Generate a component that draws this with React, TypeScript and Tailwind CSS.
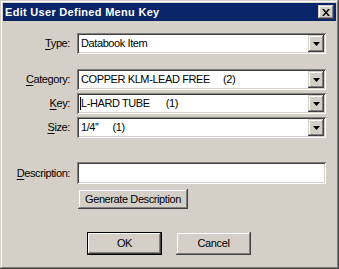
const raised =
  "shadow-[inset_-1px_-1px_#404040,inset_1px_1px_#d4d0c8,inset_-2px_-2px_#808080,inset_2px_2px_#ffffff]";
const sunken =
  "shadow-[inset_1px_1px_#808080,inset_-1px_-1px_#ffffff,inset_2px_2px_#404040,inset_-2px_-2px_#d4d0c8]";

function Label({ acc, rest }: { acc: string; rest: string }) {
  return (
    <div className="w-[67px] text-right text-black">
      <span className="underline underline-offset-[2px]">{acc}</span>
      {rest}
    </div>
  );
}

function Combo({ value, count, gap = "", caret }: { value: string; count?: string; gap?: string; caret?: boolean }) {
  return (
    <div className={`relative flex h-[21px] w-[249px] items-center bg-white pl-[4px] ${sunken}`}>
      {caret && <div className="absolute left-[3px] top-[4px] h-[13px] w-[1px] bg-black" />}
      <div className="flex flex-1 text-black">
        <span className="whitespace-pre">{value}</span>
        {count && <span className={gap}>{count}</span>}
      </div>
      <div className={`mr-[2px] flex h-[17px] w-[16px] items-center justify-center bg-[#d4d0c8] ${raised}`}>
        <svg width="7" height="4" viewBox="0 0 7 4">
          <path d="M0 0h7L3.5 4z" fill="#000" />
        </svg>
      </div>
    </div>
  );
}

function Row({ acc, rest, children, className = "" }: { acc: string; rest: string; children: React.ReactNode; className?: string }) {
  return (
    <div className={`flex items-center gap-[7px] ${className}`}>
      <Label acc={acc} rest={rest} />
      {children}
    </div>
  );
}

export default function App() {
  return (
    <div
      className={`flex h-[269px] w-[339px] flex-col bg-[#d4d0c8] p-[3px] font-['Liberation_Sans',Arial,sans-serif] text-[11px] tracking-[-0.4px] ${raised}`}
    >
      <div className="flex h-[18px] items-center justify-between bg-[#0a246a] pl-[2px] pr-[2px]">
        <span className="text-[11px] font-bold tracking-[0.3px] text-white">Edit User Defined Menu Key</span>
        <div className={`flex h-[14px] w-[16px] items-center justify-center bg-[#d4d0c8] ${raised}`}>
          <svg width="8" height="7" viewBox="0 0 8 7">
            <path d="M0 0h2l2 2.5L6 0h2L5 3.5 8 7H6L4 4.5 2 7H0l3-3.5z" fill="#000" />
          </svg>
        </div>
      </div>

      <div className="flex flex-col">
        <Row acc="T" rest="ype:" className="mt-[12px]">
          <Combo value="Databook Item" />
        </Row>
        <Row acc="C" rest="ategory:" className="mt-[15px]">
          <Combo value="COPPER KLM-LEAD FREE" count="(2)" gap="ml-[13px]" />
        </Row>
        <Row acc="K" rest="ey:" className="mt-[3px]">
          <Combo value="L-HARD TUBE" count="(1)" gap="ml-[16px]" caret />
        </Row>
        <Row acc="S" rest="ize:" className="mt-[3px]">
          <Combo value={"1/4''"} count="(1)" gap="ml-[14px]" />
        </Row>
        <Row acc="D" rest="escription:" className="mt-[24px]">
          <div className={`h-[22px] w-[249px] bg-white ${sunken}`} />
        </Row>
        <div className="mt-[5px] pl-[75px]">
          <button className={`h-[20px] w-[110px] bg-[#d4d0c8] text-black ${raised}`}>
            Generate Description
          </button>
        </div>
        <div className="mt-[23px] flex gap-[14px] pl-[84px]">
          <button
            className="h-[23px] w-[75px] bg-[#d4d0c8] text-black shadow-[inset_1px_1px_#000,inset_-1px_-1px_#000,inset_-2px_-2px_#404040,inset_2px_2px_#ffffff,inset_-3px_-3px_#808080]"
          >
            OK
          </button>
          <button className={`h-[23px] w-[75px] bg-[#d4d0c8] text-black ${raised}`}>Cancel</button>
        </div>
      </div>
    </div>
  );
}
